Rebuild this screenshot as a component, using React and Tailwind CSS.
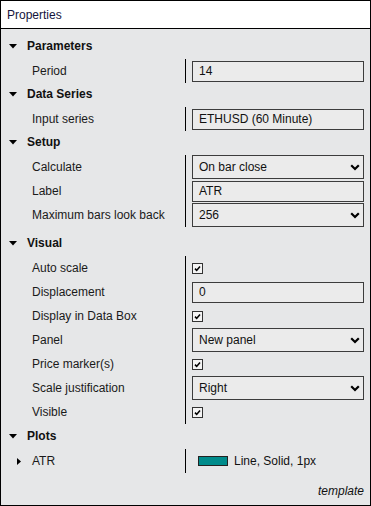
import React from "react";

// property grid sections
const sections = [
  {
    title: "Parameters",
    pad: "pb-0",
    rows: [{ label: "Period", type: "input", value: "14" }],
  },
  {
    title: "Data Series",
    pad: "pb-0",
    rows: [{ label: "Input series", type: "input", value: "ETHUSD (60 Minute)" }],
  },
  {
    title: "Setup",
    pad: "pb-[5px]",
    rows: [
      { label: "Calculate", type: "select", value: "On bar close" },
      { label: "Label", type: "input", value: "ATR" },
      { label: "Maximum bars look back", type: "select", value: "256" },
    ],
  },
  {
    title: "Visual",
    pad: "pb-px",
    rows: [
      { label: "Auto scale", type: "check" },
      { label: "Displacement", type: "input", value: "0" },
      { label: "Display in Data Box", type: "check" },
      { label: "Panel", type: "select", value: "New panel" },
      { label: "Price marker(s)", type: "check" },
      { label: "Scale justification", type: "select", value: "Right" },
      { label: "Visible", type: "check" },
    ],
  },
  {
    title: "Plots",
    pad: "pb-1",
    rows: [{ label: "ATR", type: "plot", value: "Line, Solid, 1px" }],
  },
];

function Chevron() {
  return (
    <svg width="10" height="7" viewBox="0 0 10 7" className="shrink-0">
      <path d="M1.2 1.2 L5 5 L8.8 1.2" fill="none" stroke="#000" strokeWidth="2.2" />
    </svg>
  );
}

function Value({ row }) {
  if (row.type === "check") {
    return (
      <div className="w-[11px] h-[11px] border border-[#333] bg-[#f4f4f4] flex items-center justify-center">
        <svg width="9" height="9" viewBox="0 0 9 9">
          <path d="M2 4.6 L3.7 6.4 L7 2.6" fill="none" stroke="#000" strokeWidth="1.6" />
        </svg>
      </div>
    );
  }

  if (row.type === "plot") {
    return (
      <div className="flex items-center pl-[6px]">
        <div className="w-[30px] h-[10px] border border-[#222] bg-[#008b8b]" />
        <span className="ml-[6px] text-[12px] text-[#111]">{row.value}</span>
      </div>
    );
  }

  const select = row.type === "select";

  return (
    <div
      className={`w-[172px] ${select ? "h-[24px]" : "h-[21px]"} border border-[#3c3c3c] bg-[#ebebeb] flex items-center justify-between pl-[6px] pr-[3px]`}
    >
      <span className="text-[12px] text-[#111]">{row.value}</span>
      {select && <Chevron />}
    </div>
  );
}

export default function App() {
  return (
    <div
      className="w-[371px] h-[506px] border border-black bg-[#e6e7e8] flex flex-col text-[#1a1a1a]"
      style={{ fontFamily: '"Liberation Sans", Arial, sans-serif' }}
    >

      {/* HEADER */}
      <div className="h-[28px] bg-white border-b border-black flex items-center pl-[6px] text-[12px] text-[#14143c]">
        Properties
      </div>

      {/* SECTIONS */}
      <div className="pt-[6px]">
        {sections.map((section) => (
          <div key={section.title}>

            <div className="h-[22px] flex items-center">
              <svg width="8" height="5" viewBox="0 0 8 5" className="ml-[8px]">
                <path d="M0 0 L8 0 L4 4.5 Z" fill="#000" />
              </svg>
              <span className="ml-[10px] text-[12px] font-bold text-[#111]">
                {section.title}
              </span>
            </div>

            <div className={`flex pt-[2px] ${section.pad}`}>
              <div className="w-[184px] shrink-0">
                {section.rows.map((row) => (
                  <div key={row.label} className="h-[24px] flex items-center">
                    {row.type === "plot" ? (
                      <>
                        <svg width="4" height="7" viewBox="0 0 4 7" className="ml-[16px]">
                          <path d="M0 0 L4 3.5 L0 7 Z" fill="#000" />
                        </svg>
                        <span className="ml-[11px] text-[12px]">{row.label}</span>
                      </>
                    ) : (
                      <span className="pl-[31px] text-[12px]">{row.label}</span>
                    )}
                  </div>
                ))}
              </div>

              <div className="border-l border-black pl-[6px]">
                {section.rows.map((row) => (
                  <div key={row.label} className="h-[24px] flex items-center">
                    <Value row={row} />
                  </div>
                ))}
              </div>
            </div>

          </div>
        ))}
      </div>

      {/* FOOTER */}
      <div className="mt-auto pb-[5px] pr-[6px] text-right text-[12px] italic text-[#111]">
        template
      </div>

    </div>
  );
}
